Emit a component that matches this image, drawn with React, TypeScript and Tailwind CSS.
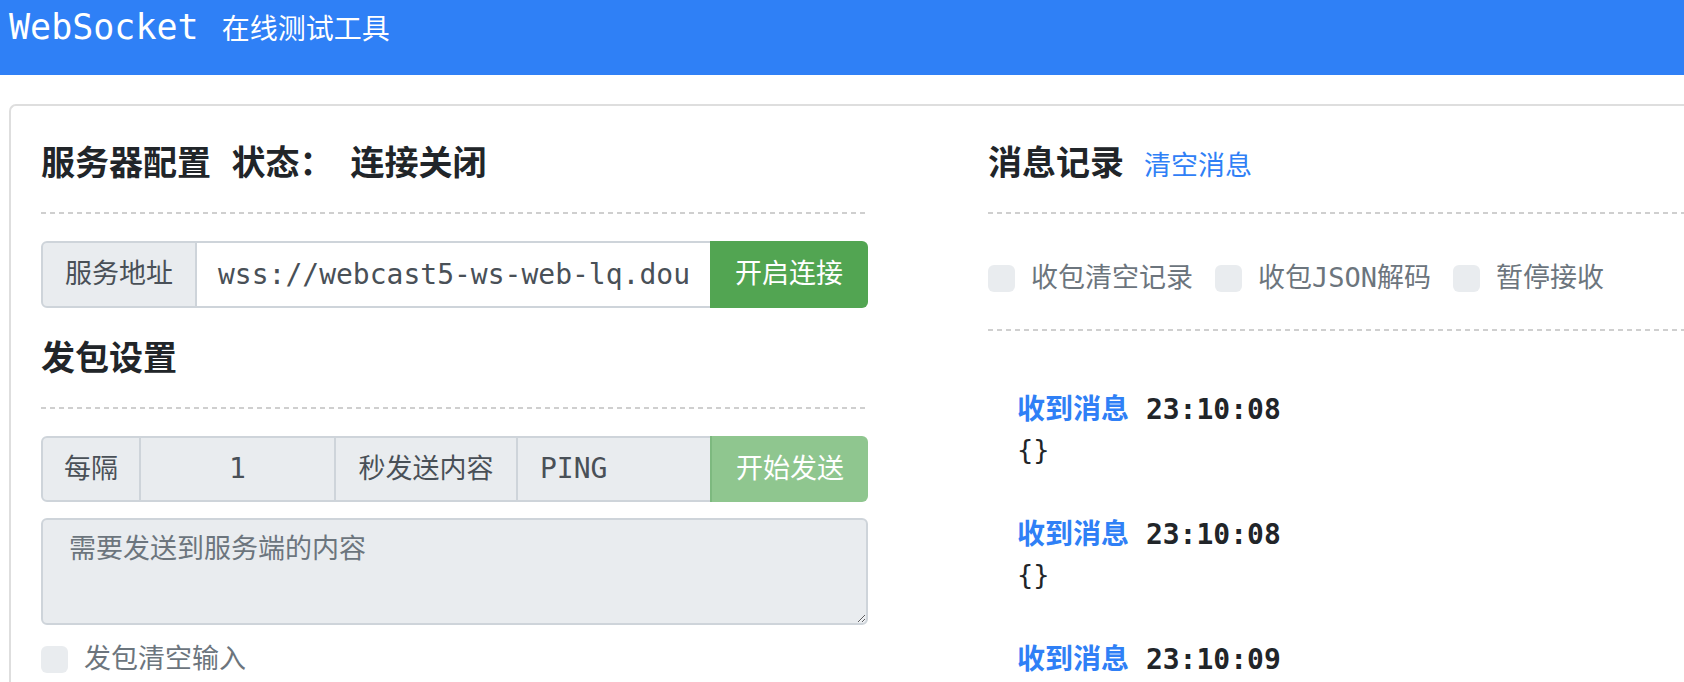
import React from "react";

const dash =
  "h-[2px] w-full bg-[repeating-linear-gradient(to_right,#cfcfcf_0px,#cfcfcf_5px,transparent_5px,transparent_9px)]";

function Check({ label }: { label: string }) {
  return (
    <div className="flex items-center">
      <div className="w-[27px] h-[27px] rounded-[6px] bg-[#e9ecef]" />
      <span className="ml-[16px] text-[27px] leading-[40px] text-[#6c757d]">{label}</span>
    </div>
  );
}

function Msg({ time }: { time: string }) {
  return (
    <div className="mb-[45px]">
      <div className="h-[40px] flex items-center text-[28px] leading-[40px] font-bold whitespace-pre">
        <span className="text-[#2f80f6]">收到消息</span>
        <span className="text-[#212529]"> {time}</span>
      </div>
      <div className="h-[40px] flex items-center text-[27px] leading-[40px] text-[#212529]">{"{}"}</div>
    </div>
  );
}

export default function App() {
  return (
    <div className="w-[1684px] h-[682px] overflow-hidden bg-white font-['DejaVu_Sans_Mono','Noto_Sans_CJK_SC',monospace] text-[#212529]">
      <header className="h-[75px] bg-[#2f80f6] flex items-baseline gap-[23px] pl-[9px] pt-[5px] text-white">
        <span className="text-[35px] leading-[44px]">WebSocket</span>
        <span className="text-[28px] leading-[44px] font-['Noto_Sans_CJK_SC',sans-serif]">在线测试工具</span>
      </header>

      <div className="ml-[9px] mt-[29px] w-[1800px] border-t-2 border-l-2 border-[#dedede] rounded-tl-[7px] pl-[30px] pt-[33px] flex">
        {/* left column */}
        <div className="w-[827px] shrink-0">
          <h2 className="text-[34px] leading-[48px] font-bold whitespace-pre">
            服务器配置 状态：<span className="ml-[17px]">连接关闭</span>
          </h2>
          <div className={`mt-[25px] ${dash}`} />

          <div className="mt-[27px] flex h-[67px] text-[27px] text-[#495057]">
            <div className="w-[156px] flex items-center justify-center bg-[#e9ecef] border-2 border-[#ced4da] rounded-l-[6px]">
              服务地址
            </div>
            <div className="w-[513px] flex items-center pl-[21px] border-y-2 border-[#ced4da] bg-white text-[28px] overflow-hidden whitespace-nowrap">
              wss://webcast5-ws-web-lq.dou
            </div>
            <div className="flex-1 flex items-center justify-center bg-[#52a552] text-white rounded-r-[6px]">
              开启连接
            </div>
          </div>

          <h2 className="mt-[26px] text-[34px] leading-[48px] font-bold">发包设置</h2>
          <div className={`mt-[25px] ${dash}`} />

          <div className="mt-[27px] flex h-[66px] text-[27px] text-[#495057]">
            <div className="w-[100px] flex items-center justify-center bg-[#e9ecef] border-2 border-[#ced4da] rounded-l-[6px]">
              每隔
            </div>
            <div className="w-[193px] flex items-center justify-center bg-[#e9ecef] border-y-2 border-[#ced4da] text-[28px]">
              1
            </div>
            <div className="w-[184px] flex items-center justify-center bg-[#e9ecef] border-2 border-[#ced4da]">
              秒发送内容
            </div>
            <div className="w-[192px] flex items-center pl-[22px] bg-[#e9ecef] border-y-2 border-[#ced4da] text-[28px]">
              PING
            </div>
            <div className="flex-1 flex items-center justify-center bg-[#8fc68f] border-l-2 border-[#7db97f] text-white rounded-r-[6px]">
              开始发送
            </div>
          </div>

          <textarea
            readOnly
            placeholder="需要发送到服务端的内容"
            className="mt-[16px] block w-full h-[107px] bg-[#e9ecef] border-2 border-[#ced4da] rounded-[6px] pl-[26px] pt-[9px] text-[27px] leading-[40px] text-[#495057] placeholder:text-[#6c757d] outline-none"
          />

          <div className="mt-[14px] h-[40px] flex items-center">
            <Check label="发包清空输入" />
          </div>
        </div>

        {/* right column */}
        <div className="ml-[120px] w-[827px] shrink-0">
          <div className="flex items-baseline gap-[20px]">
            <h2 className="text-[34px] leading-[48px] font-bold">消息记录</h2>
            <span className="text-[27px] leading-[40px] text-[#2f80f6]">清空消息</span>
          </div>
          <div className={`mt-[25px] ${dash}`} />
          <div className="mt-[44px] h-[40px] flex items-center gap-[22px]">
            <Check label="收包清空记录" />
            <Check label="收包JSON解码" />
            <Check label="暂停接收" />
          </div>
          <div className={`mt-[31px] ${dash}`} />
          <div className="mt-[59px] pl-[29px]">
            <Msg time="23:10:08" />
            <Msg time="23:10:08" />
            <Msg time="23:10:09" />
          </div>
        </div>
      </div>
    </div>
  );
}
